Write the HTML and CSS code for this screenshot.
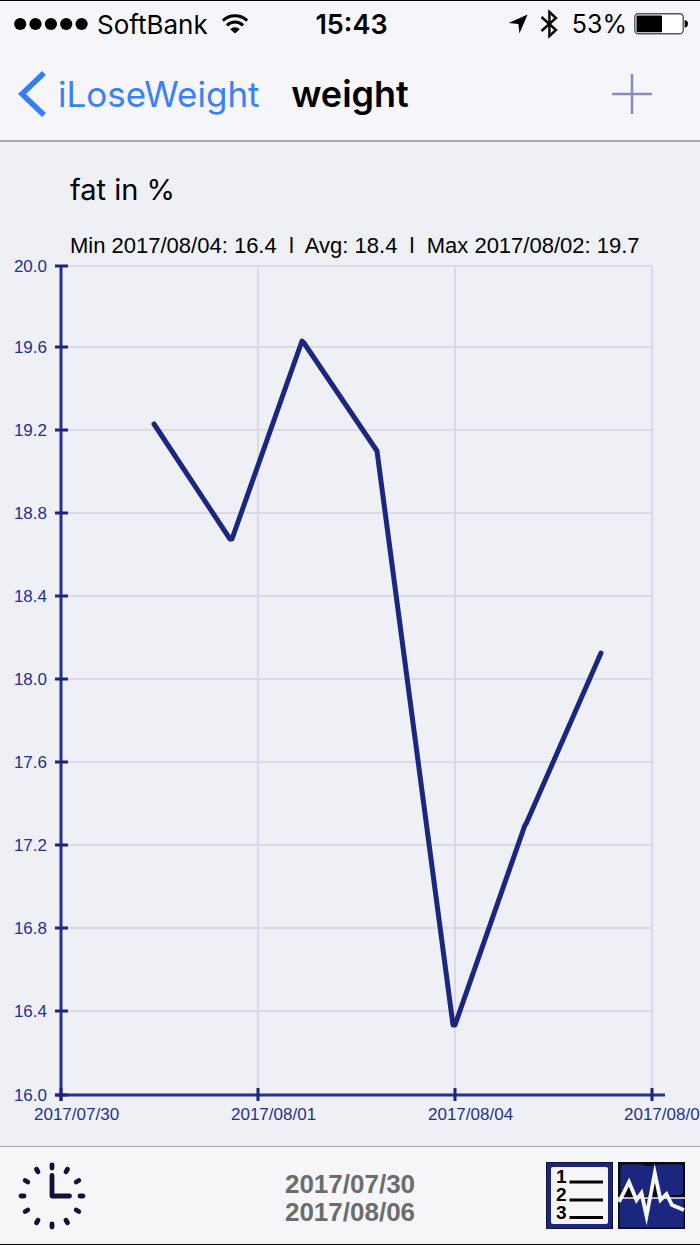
FILE: index.html
```html
<!DOCTYPE html>
<html lang="en">
<head>
<meta charset="utf-8">
<meta name="viewport" content="width=device-width, initial-scale=1">
<title>weight</title>
<link rel="stylesheet" href="styles.css">
</head>
<body>
<header class="header">
  <div class="status">
    <div class="status-left">
      <svg class="signal" width="74" height="14" viewBox="0 0 74 14" aria-hidden="true">
        <circle cx="6.2" cy="7" r="6.1"/><circle cx="21.5" cy="7" r="6.1"/><circle cx="36.9" cy="7" r="6.1"/><circle cx="52.2" cy="7" r="6.1"/><circle cx="67.6" cy="7" r="6.1"/>
      </svg>
      <span>SoftBank</span>
      <svg class="wifi" width="28" height="20" viewBox="0 0 28 20" aria-hidden="true">
        <path d="M1.8 6.6A17.5 17.5 0 0 1 26.2 6.6M6 11.3A11.5 11.5 0 0 1 22 11.3" fill="none" stroke="#000" stroke-width="3"/>
        <path d="M14 19.6L9.2 15.2A7 7 0 0 1 18.8 15.2Z"/>
      </svg>
    </div>
    <time class="clock">15:43</time>
    <div class="status-right">
      <svg class="location" width="20" height="20" viewBox="0 0 20 20" aria-hidden="true"><path d="M19.6 .4L11.4 19.6L10.4 10L.6 9Z"/></svg>
      <svg class="bluetooth" width="18" height="30" viewBox="0 0 18 30" aria-hidden="true"><path d="M1.5 8L16 21L9.4 27V3L16 9L1.5 22" fill="none" stroke="#000" stroke-width="2.4"/></svg>
      <span class="percent">53%</span>
      <svg class="battery" width="55" height="22" viewBox="0 0 55 22" aria-hidden="true">
        <rect x=".8" y=".8" width="48.4" height="20" rx="3.5" fill="#fff" stroke="#555" stroke-width="1.4"/>
        <rect x="2.5" y="2.6" width="25.5" height="16.6" rx="1"/>
        <path d="M50.6 7Q54 7.4 54 10.8T50.6 14.6Z"/>
      </svg>
    </div>
  </div>
  <nav class="nav">
    <a class="back" href="#">
      <svg width="28" height="46" viewBox="0 0 28 46" aria-hidden="true"><path d="M26 2L4 23L26 44" fill="none" stroke="#357cf7" stroke-width="5.6"/></svg>
      <span>iLoseWeight</span>
    </a>
    <h1 class="title">weight</h1>
    <button class="add" type="button" aria-label="Add entry">
      <svg width="40" height="40" viewBox="0 0 40 40" aria-hidden="true"><path d="M0 20H40M20 0V40" stroke="#888dbc" stroke-width="2.6"/></svg>
    </button>
  </nav>
</header>

<main class="main">
  <h2 class="measure">fat in %</h2>
  <p class="stats">Min 2017/08/04: 16.4  l  Avg: 18.4  l  Max 2017/08/02: 19.7</p>
  <svg class="chart" viewBox="0 258 700 868" role="img" aria-label="Fat in % from 2017/07/30 to 2017/08/06">
    <path class="grid" d="M62 266H652M62 347H652M62 430H652M62 513H652M62 596H652M62 679H652M62 762H652M62 845H652M62 928H652M62 1011H652M258 266V1095M455 266V1095M652 266V1095"/>
    <path class="axis" d="M61 266V1101M55 1095H665"/>
    <path class="ticks" d="M55 266H68M55 347H68M55 430H68M55 513H68M55 596H68M55 679H68M55 762H68M55 845H68M55 928H68M55 1011H68M55 1095H68M61 1088V1101M258 1088V1101M455 1088V1101M652 1088V1101"/>
    <path class="line" d="M154 424L230 539H232L302 341L304 343L377 451L453 1025H455L525 825L526 824L601 653"/>
    <g class="labels values">
      <text x="47" y="272">20.0</text>
      <text x="47" y="353">19.6</text>
      <text x="47" y="436">19.2</text>
      <text x="47" y="519">18.8</text>
      <text x="47" y="602">18.4</text>
      <text x="47" y="685">18.0</text>
      <text x="47" y="768">17.6</text>
      <text x="47" y="851">17.2</text>
      <text x="47" y="934">16.8</text>
      <text x="47" y="1017">16.4</text>
      <text x="47" y="1101">16.0</text>
    </g>
    <g class="labels">
      <text x="34" y="1120">2017/07/30</text>
      <text x="231" y="1120">2017/08/01</text>
      <text x="428" y="1120">2017/08/04</text>
      <text x="624" y="1120">2017/08/0</text>
    </g>
  </svg>
</main>

<footer class="toolbar">
  <button class="tool period" type="button" aria-label="Time range">
    <svg width="68" height="68" viewBox="-34 -34 68 68" aria-hidden="true">
      <g fill="none" stroke="#13113c" stroke-width="4.8" stroke-linecap="round" stroke-linejoin="round">
        <path d="M0 -20.5V0H17.5"/>
        <path d="M0 -31V-28M0 28V31M-31 0H-28M28 0H31M15.5 -26.8L14 -24.2M26.8 -15.5L24.2 -14M26.8 15.5L24.2 14M15.5 26.8L14 24.2M-15.5 26.8L-14 24.2M-26.8 15.5L-24.2 14M-26.8 -15.5L-24.2 -14M-15.5 -26.8L-14 -24.2"/>
      </g>
    </svg>
  </button>
  <p class="range"><time>2017/07/30</time><time>2017/08/06</time></p>
  <div class="views">
    <button class="tool" type="button" aria-label="List">
      <svg width="67" height="67" viewBox="0 0 67 67" aria-hidden="true">
        <rect x=".5" y=".5" width="66" height="66" fill="#1b267f" stroke="#11132f"/>
        <rect x="5" y="5" width="57" height="57" rx="2" fill="#f6f6f9"/>
        <path d="M23.5 20H57M23.5 38H57M23.5 55.5H57" stroke="#000" stroke-width="2.8"/>
        <g class="numerals"><text x="10" y="21">1</text><text x="10" y="39">2</text><text x="10" y="57">3</text></g>
      </svg>
    </button>
    <button class="tool" type="button" aria-label="Chart">
      <svg width="67" height="67" viewBox="0 0 67 67" aria-hidden="true">
        <rect width="67" height="67" fill="#080a18"/>
        <path d="M6 2.5H26L28 4H38L40 2.5H62Q65 2.5 65 6V29Q65 32 62 33H52L49 29L43 34L37 10L29 34H17L11 18L2.5 30V7Q2.5 2.5 6 2.5Z" fill="#1b267f"/>
        <path d="M1.5 36H65.5V65.5H1.5Z" fill="#1b267f"/>
        <path d="M0 36H67" stroke="#e9e9f2" stroke-width="1.6"/>
        <path d="M1 40L11 20L18.5 38L23.5 31L28.5 54L36.8 11L42.5 38L48.5 32L54 43L66 48" fill="none" stroke="#f8f8f8" stroke-width="3.8" stroke-miterlimit="6"/>
      </svg>
    </button>
  </div>
</footer>
</body>
</html>
```

FILE: styles.css
```css
* {
  box-sizing: border-box;
}

body {
  margin: 0;
  min-height: 100vh;
  display: flex;
  flex-direction: column;
  overflow-x: hidden;
  border-top: 1px solid #000;
  border-bottom: 2px solid #000;
  background: #efeff6;
  color: #000;
  font-family: Inter, "Liberation Sans", sans-serif;
}

svg {
  display: block;
  flex: none;
}

button {
  padding: 0;
  border: 0;
  background: none;
  cursor: pointer;
}

.header {
  background: #f6f6fa;
  border-bottom: 2px solid #a9a9ad;
}

.status {
  display: grid;
  grid-template-columns: 1fr auto 1fr;
  align-items: center;
  height: 46px;
  padding: 0 11px 0 14px;
  font-size: 26px;
}

.status-left,
.status-right {
  display: flex;
  align-items: center;
}

.status-left {
  gap: 9px;
}

.wifi {
  margin-left: 4px;
}

.clock {
  font-size: 27px;
  font-weight: 600;
}

.status-right {
  justify-content: flex-end;
}

.percent {
  font-size: 25px;
}

.location {
  margin-right: 12px;
}

.bluetooth {
  margin-right: 14px;
}

.battery {
  margin-left: 7px;
}

.nav {
  display: grid;
  grid-template-columns: 1fr auto 1fr;
  align-items: center;
  height: 93px;
  padding: 0 18px;
}

.back {
  display: flex;
  align-items: center;
  gap: 12px;
  color: #3a80f6;
  font-size: 35px;
  text-decoration: none;
}

.title {
  margin: 0;
  font-size: 36px;
  font-weight: 600;
  line-height: 40px;
}

.add {
  justify-self: end;
  margin-right: 30px;
}

.main {
  flex: 1;
  padding: 28px 0 20px;
}

.measure {
  margin: 0;
  padding-left: 70px;
  font-size: 29px;
  font-weight: 400;
  line-height: 40px;
}

.stats {
  margin: 0;
  padding: 24px 0 0 70px;
  font-family: "Liberation Sans", Arial, sans-serif;
  font-size: 22px;
  line-height: 24px;
  white-space: pre;
}

.chart {
  width: 100%;
  height: auto;
}

.grid,
.axis,
.ticks,
.line {
  fill: none;
}

.grid {
  stroke: #d9dae6;
  stroke-width: 2;
}

.axis {
  stroke: #25318a;
  stroke-width: 3;
}

.ticks {
  stroke: #1b267f;
  stroke-width: 3;
}

.line {
  stroke: #1b267f;
  stroke-width: 5;
  stroke-linecap: round;
  stroke-linejoin: round;
}

.labels {
  fill: #25318f;
  font-family: "Liberation Sans", Arial, sans-serif;
  font-size: 17px;
}

.values {
  text-anchor: end;
}

.toolbar {
  display: grid;
  grid-template-columns: 1fr auto 1fr;
  align-items: center;
  height: 98px;
  padding: 0 15px;
  border-top: 1px solid #a9a9ad;
  background: #f6f6f9;
}

.tool {
  justify-self: start;
}

.period {
  margin-left: 3px;
}

.range {
  display: flex;
  flex-direction: column;
  margin: 0;
  padding-top: 4px;
  color: #6c6c6e;
  font-family: "Liberation Sans", Arial, sans-serif;
  font-size: 26px;
  font-weight: 700;
  line-height: 28px;
}

.views {
  display: flex;
  justify-content: flex-end;
  gap: 5px;
}

.numerals {
  font-family: "Liberation Sans", Arial, sans-serif;
  font-size: 19px;
  font-weight: 700;
}
```
